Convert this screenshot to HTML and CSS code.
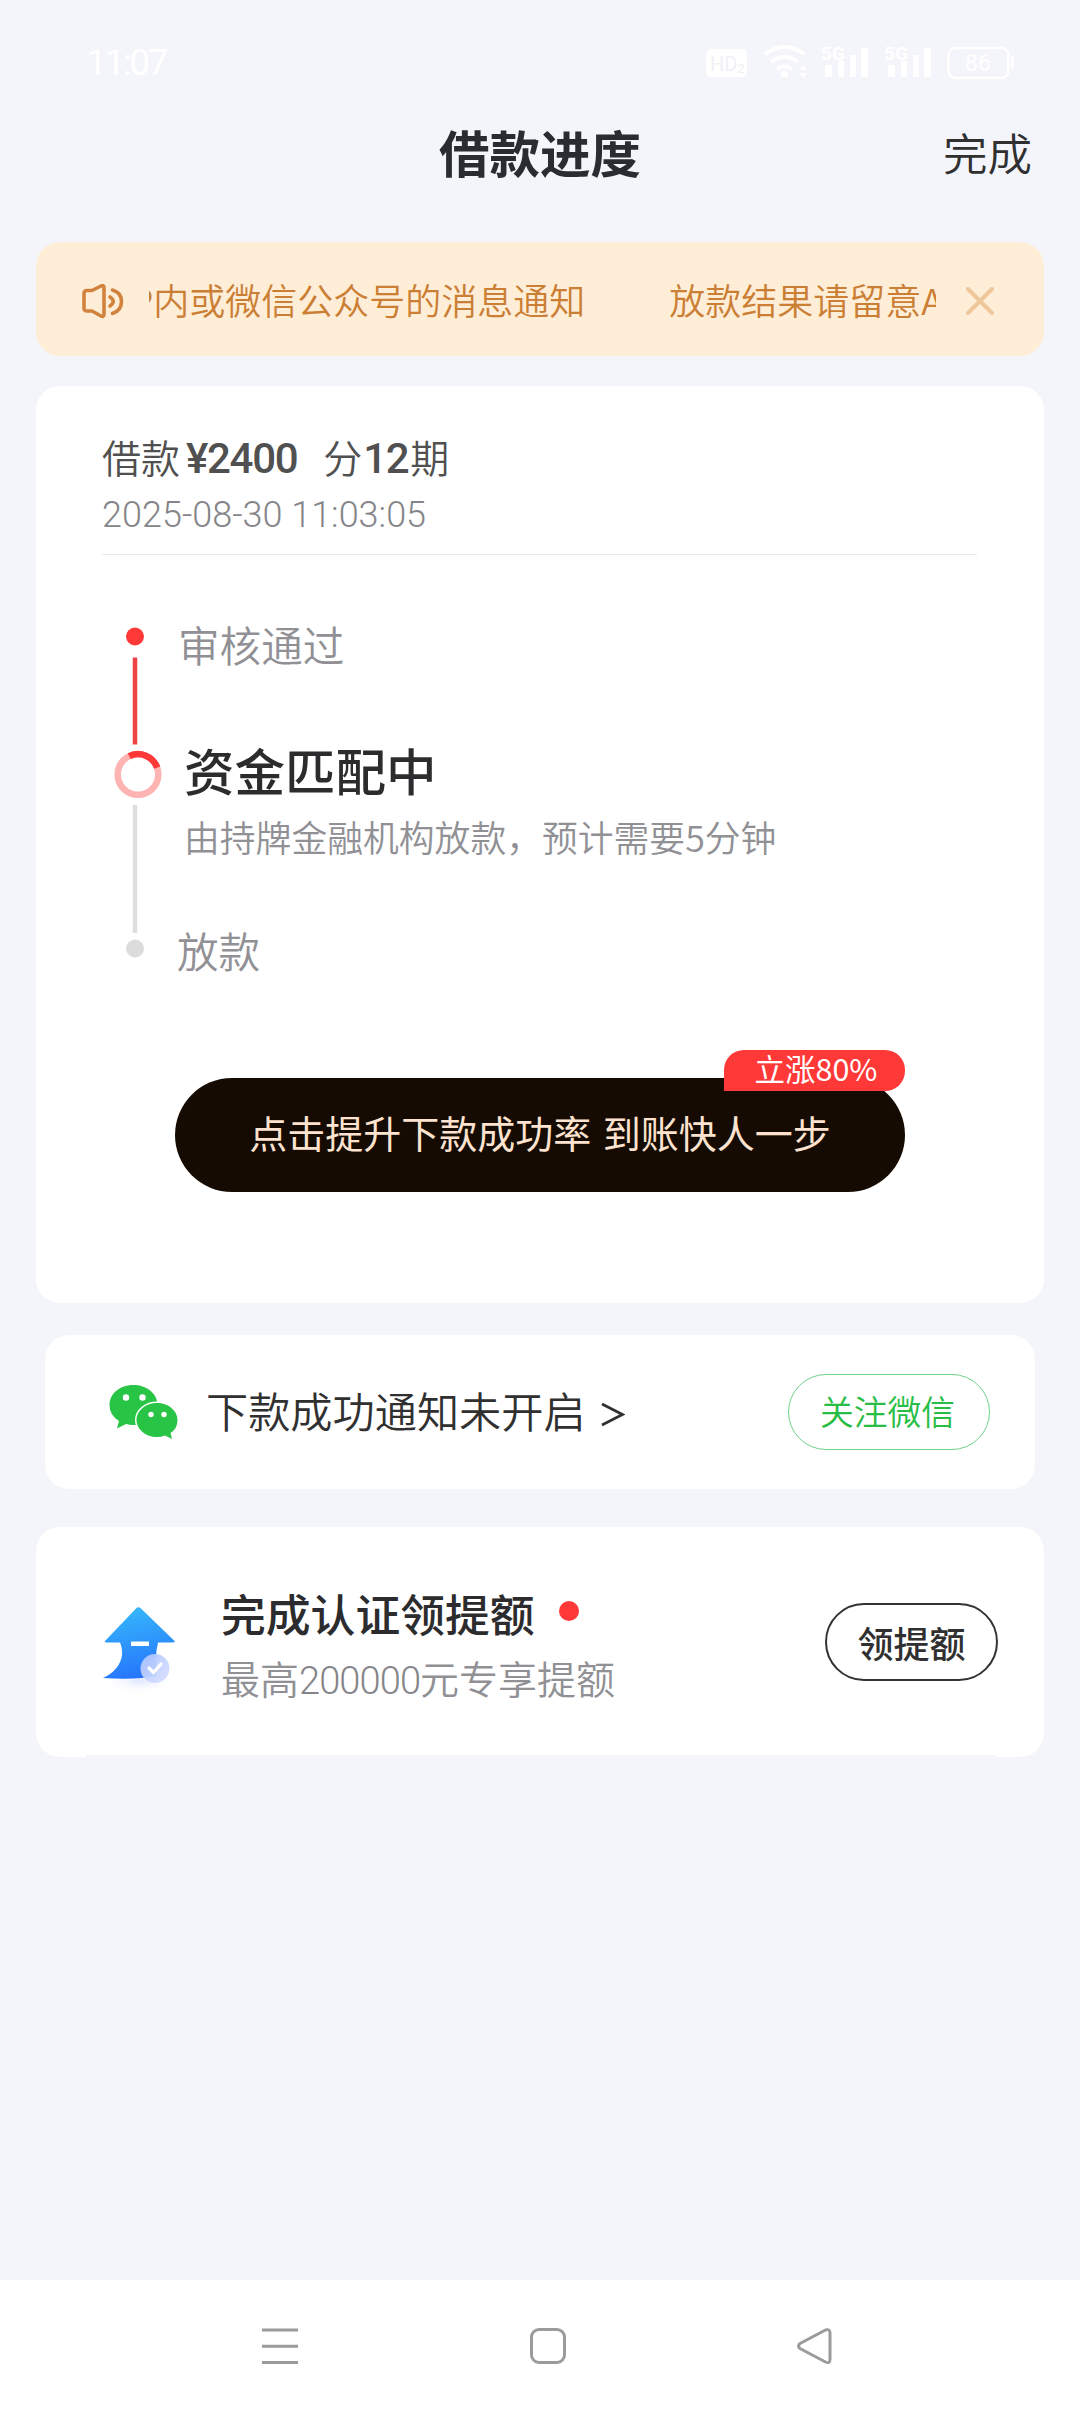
FILE: index.html
```html
<!DOCTYPE html>
<html lang="zh-CN">
<head>
<meta charset="utf-8">
<title>借款进度</title>
<link rel="stylesheet" href="styles.css">
</head>
<body>
<div class="screen">
  <header class="status">
    <span class="status-time">11:07</span>
    <svg class="status-icons" width="320" height="40" viewBox="700 42 320 40" fill="#fff">
      <rect x="706" y="49" width="41" height="28" rx="5"/>
      <text class="hd" x="710" y="71">HD<tspan class="hd-small" dy="2">2</tspan></text>
      <g fill="none" stroke="#fff" stroke-width="4">
        <path d="M765 54q19.500-14 39 0M771 62q13.500-10 27 0M777 69q7.500-5 15 0"/>
      </g>
      <circle cx="784.500" cy="74" r="3.500"/>
      <path d="M799 70l4-5 4 5zM799 73h8l-4 5z"/>
      <text class="net" x="821" y="60">5G</text>
      <path d="M825 65h7v12h-7zM838 61h6v16h-6zM850 55h6v22h-6zM861 48h7v29h-7z"/>
      <text class="net" x="884" y="60">5G</text>
      <path d="M888 65h7v12h-7zM901 61h6v16h-6zM913 55h6v22h-6zM924 48h7v29h-7z"/>
      <rect x="948.500" y="48" width="60" height="30" rx="7" fill="none" stroke="#fff" stroke-width="2.500"/>
      <rect x="1011" y="56" width="3" height="13" rx="1.500"/>
      <text class="battery" x="965" y="71">86</text>
    </svg>
  </header>

  <div class="titlebar">
    <h1 class="title">借款进度</h1>
    <span class="done">完成</span>
  </div>

  <div class="notice">
    <svg class="speaker" width="44" height="40" viewBox="0 0 44 40" fill="none" stroke="#d1833d" stroke-width="3.600" stroke-linecap="round" stroke-linejoin="round">
      <path d="M2 12.500q0-3 3-3h5L19 5q3-1.500 3 2v26q0 3.500-3 2l-9-5H5q-3 0-3-3z"/>
      <path d="M30.500 9q9 2.500 9 11.500t-9 12M28 16q6.500 4.500 0 9"/>
    </svg>
    <div class="marquee"><div class="marquee-track"><span>放款结果请留意APP内或微信公众号的消息通知</span><span>放款结果请留意APP内或微信公众号的消息通知</span></div></div>
    <svg class="close" width="28" height="28" viewBox="0 0 28 28" stroke="#eec69b" stroke-width="4" stroke-linecap="round"><path d="M2 2l24 24M26 2L2 26"/></svg>
  </div>

  <section class="card progress">
    <div class="loan"><span>借款</span><b class="num amount">¥2400</b><span>分</span><b class="num term">12</b><span>期</span></div>
    <div class="time">2025-08-30 11:03:05</div>
    <div class="steps">
      <svg class="rail" width="52" height="350" viewBox="112 620 52 350">
        <circle cx="135" cy="636.500" r="9" fill="#ff3838"/>
        <path d="M135 657.500V744.500" stroke="#ee4245" stroke-width="4.500"/>
        <circle cx="138" cy="774.500" r="20.300" fill="none" stroke="#ffb4b4" stroke-width="6.500"/>
        <path d="M129.200 756.200A20.300 20.300 0 0 1 157.200 767.700" fill="none" stroke="#ff3838" stroke-width="6.500"/>
        <path d="M135 805V933" stroke="#dedede" stroke-width="4.500"/>
        <circle cx="135" cy="948.500" r="9" fill="#dcdcdc"/>
      </svg>
      <div class="step-list">
        <div class="step">审核通过</div>
        <div class="current">资金匹配中</div>
        <div class="detail">由持牌金融机构放款，预计需要5分钟</div>
        <div class="step last">放款</div>
      </div>
    </div>
    <div class="boost">点击提升下款成功率 到账快人一步<span class="badge">立涨80%</span></div>
  </section>

  <section class="card wechat">
    <svg class="wechat-icon" width="70" height="56" viewBox="109 1383 70 56" fill="#28c445">
      <path d="M133.500 1384C146 1384 157.500 1392 157.500 1404S147 1424 133.500 1424q-4 0-7.500-1l-9 4.500 2-7.500Q109.500 1414 109.500 1404C109.500 1392.500 120 1384 133.500 1384z"/>
      <path d="M157 1402c11 0 20.500 7.500 20.500 17q0 8.500-7 13l1.500 6-7-3.500q-4 1.500-8 1.500c-11 0-20.500-7.500-20.500-17s9.500-17 20.500-17z" stroke="#fff" stroke-width="3" paint-order="stroke"/>
      <g fill="#fff"><circle cx="126" cy="1396.500" r="3.200"/><circle cx="142.500" cy="1396.500" r="3.200"/><circle cx="151" cy="1413.500" r="2.700"/><circle cx="164" cy="1413.500" r="2.700"/></g>
    </svg>
    <span class="wechat-text">下款成功通知未开启</span>
    <svg class="chevron" width="24" height="25" viewBox="0 0 24 25" fill="none" stroke="#303030" stroke-width="2.800"><path d="M1 2l20.500 10.500L1 23"/></svg>
    <span class="pill follow">关注微信</span>
  </section>

  <section class="card raise">
    <svg class="raise-icon" width="78" height="92" viewBox="0 0 78 92">
      <defs>
        <linearGradient id="arrow" x1="0.400" y1="0" x2="0.600" y2="1"><stop offset="0" stop-color="#35b7fc"/><stop offset="1" stop-color="#2673fb"/></linearGradient>
        <radialGradient id="glow"><stop offset="0" stop-color="#dfe5ff"/><stop offset="1" stop-color="#fff" stop-opacity="0"/></radialGradient>
        <linearGradient id="seal" x1="0" y1="0" x2="1" y2="1"><stop offset="0" stop-color="#abc2ff"/><stop offset="1" stop-color="#dbe2ff"/></linearGradient>
      </defs>
      <ellipse cx="38" cy="76" rx="36" ry="13" fill="url(#glow)"/>
      <path d="M35 3.500q2.500-2.500 5 0L72.500 35q3 2.500-1 2.500H57Q55 45 55 55v16Q36 75 2 73 19 65 21 50q.5-7-2-12.500H6q-4 0-1-2.500z" fill="url(#arrow)"/>
      <path d="M30 36.500h18v4.500H30z" fill="#fff"/>
      <circle cx="54" cy="63.500" r="14.500" fill="url(#seal)" opacity=".94"/>
      <path d="M48 63l4.500 4.500 7.500-8.500" fill="none" stroke="#fff" stroke-width="3.200" stroke-linecap="round" stroke-linejoin="round"/>
    </svg>
    <div class="raise-copy">
      <div class="raise-title">完成认证领提额<i class="dot"></i></div>
      <div class="raise-sub">最高<span class="num">200000</span>元专享提额</div>
    </div>
    <span class="pill claim">领提额</span>
  </section>

  <nav class="navbar">
    <svg width="36" height="38" viewBox="0 0 36 38" stroke="#9b9b9b" stroke-width="3"><path d="M0 3h36M0 19.300h36M0 35.500h36"/></svg>
    <svg width="36" height="38" viewBox="0 0 36 38" fill="none" stroke="#9b9b9b" stroke-width="3"><rect x="1.500" y="2.500" width="33" height="33" rx="7.500"/></svg>
    <svg width="36" height="38" viewBox="0 0 36 38" fill="none" stroke="#9b9b9b" stroke-width="3" stroke-linejoin="round"><path d="M3 16.500L28.500 3Q33 1.500 33 6v26.500q0 4.500-4.500 2.500L3 21.500q-3-2.500 0-5z"/></svg>
  </nav>
</div>
</body>
</html>
```
FILE: styles.css
```css
* { box-sizing: border-box; }
body {
  margin: 0;
  background: #f4f5fa;
  color: #303030;
  font-family: "Noto Sans CJK SC", sans-serif;
  font-weight: 350;
}
.screen {
  display: flex;
  flex-direction: column;
  width: 1080px;
  height: 2412px;
  overflow: hidden;
}
.screen svg { flex: none; display: block; }
.num { font-family: Roboto, sans-serif; }

.status {
  display: flex;
  justify-content: space-between;
  height: 100px;
  padding: 42px 60px 0 86px;
  color: #fff;
}
.status-time { font: 400 37px/42px Roboto, sans-serif; letter-spacing: -2.4px; }
.hd { font: 400 20px Roboto, sans-serif; fill: #f0f1f5; }
.hd-small { font-size: 12px; }
.net { font: 700 19px Roboto, sans-serif; }
.battery { font: 400 23px Roboto, sans-serif; }

.titlebar {
  display: grid;
  grid-template-columns: 1fr auto 1fr;
  align-items: center;
  height: 104px;
  padding: 0 48px;
}
.title {
  grid-column: 2;
  margin: -2px 0 0;
  font-size: 50.5px;
  font-weight: 700;
  line-height: 104px;
  color: #2b2b32;
}
.done { justify-self: end; margin-top: -1px; font-size: 44.500px; line-height: 100px; }

.notice {
  display: flex;
  align-items: center;
  height: 114px;
  margin: 38px 36px 0;
  padding: 4px 48px 0 46px;
  border-radius: 24px;
  background: #ffeed7;
  color: #cb7f35;
}
.marquee {
  display: flex;
  justify-content: flex-end;
  width: 787px;
  margin: -4px 30px 0 23px;
  overflow: hidden;
}
.marquee-track {
  display: flex;
  flex: none;
  gap: 84px;
  margin-right: -484px;
  font-size: 36px;
  line-height: 60px;
  white-space: nowrap;
}

.card { margin: 0 36px; border-radius: 24px; background: #fff; }
.progress { height: 917px; margin-top: 30px; padding: 42px 67px 0 66px; }
.loan { display: flex; height: 59px; font-size: 39px; line-height: 56px; color: #505050; }
.amount { margin: 0 26px 0 6px; font-size: 42px; font-weight: 500; line-height: 61px; letter-spacing: -1.3px; }
.term { margin: 0 2px 0 1px; font-size: 42px; font-weight: 500; line-height: 61px; letter-spacing: -1.4px; }
.time {
  height: 68px;
  border-bottom: 1px solid #e9e9ec;
  font: 300 36px/56px Roboto, sans-serif;
  letter-spacing: 0;
  color: #858589;
}
.steps { display: flex; height: 439px; padding: 65px 0 0 10px; }
.step-list { padding-left: 14px; color: #909095; white-space: nowrap; }
.step { margin-top: -1px; font-size: 41.600px; line-height: 50px; }
.current {
  margin: 65px 0 0 6px;
  font-size: 50.500px;
  font-weight: 500;
  line-height: 70px;
  color: #2c2c2e;
}
.detail { margin: 7px 0 0 6px; font-size: 35.800px; line-height: 50px; }
.last { margin: 64px 0 0 -1px; }
.boost {
  position: relative;
  width: 730px;
  height: 114px;
  margin: 84px 0 0 73px;
  border-radius: 58px;
  background: #150b02;
  color: #fde3cf;
  font-size: 38px;
  font-weight: 400;
  line-height: 108px;
  text-align: center;
  word-spacing: 3px;
  white-space: nowrap;
}
.badge {
  position: absolute;
  top: -28px;
  right: 0;
  width: 181px;
  height: 41px;
  padding-left: 3px;
  border-radius: 20px 20px 20px 0;
  background: #ff3838;
  color: #fff;
  font-size: 30.500px;
  line-height: 37px;
}

.wechat {
  display: flex;
  align-items: center;
  height: 154px;
  margin: 32px 45px 0;
  padding: 0 45px 0 64px;
}
.wechat-text { margin: -5px 0 0 27px; font-size: 42.200px; line-height: 60px; }
.chevron { margin: 5px 0 0 15px; }
.pill {
  display: flex;
  align-items: center;
  justify-content: center;
  margin-left: auto;
  border-radius: 39px;
}
.follow {
  width: 202px;
  height: 76px;
  padding: 0 3px 3px 0;
  border: 1.500px solid #6fd28a;
  color: #28bd45;
  font-size: 33.800px;
}
.raise {
  display: flex;
  align-items: center;
  position: relative;
  height: 230px;
  margin-top: 38px;
  padding: 0 46px 0 66px;
}
.raise::after {
  content: "";
  position: absolute;
  left: 50px;
  right: 48px;
  bottom: 0;
  height: 2px;
  background: #f4f5fa;
}
.raise-icon { margin: 18px 0 0 -1px; }
.raise-copy { margin-left: 42px; padding-top: 9px; }
.raise-title { display: flex; align-items: center; font-size: 44.800px; font-weight: 500; line-height: 64px; color: #2c2c2e; }
.dot { width: 20px; height: 20px; margin: -4px 0 0 24px; border-radius: 50%; background: #ff3838; }
.raise-sub { font-size: 39px; line-height: 64px; color: #909095; }
.raise-sub .num { font-size: 38px; font-weight: 300; letter-spacing: -.900px; color: #858589; }
.claim {
  width: 173px;
  height: 78px;
  border: 2px solid #333;
  font-size: 36px;
  font-weight: 500;
}

.navbar {
  display: flex;
  justify-content: space-between;
  align-items: center;
  height: 132px;
  margin-top: auto;
  padding: 0 247px 0 262px;
  background: #fff;
}
```
